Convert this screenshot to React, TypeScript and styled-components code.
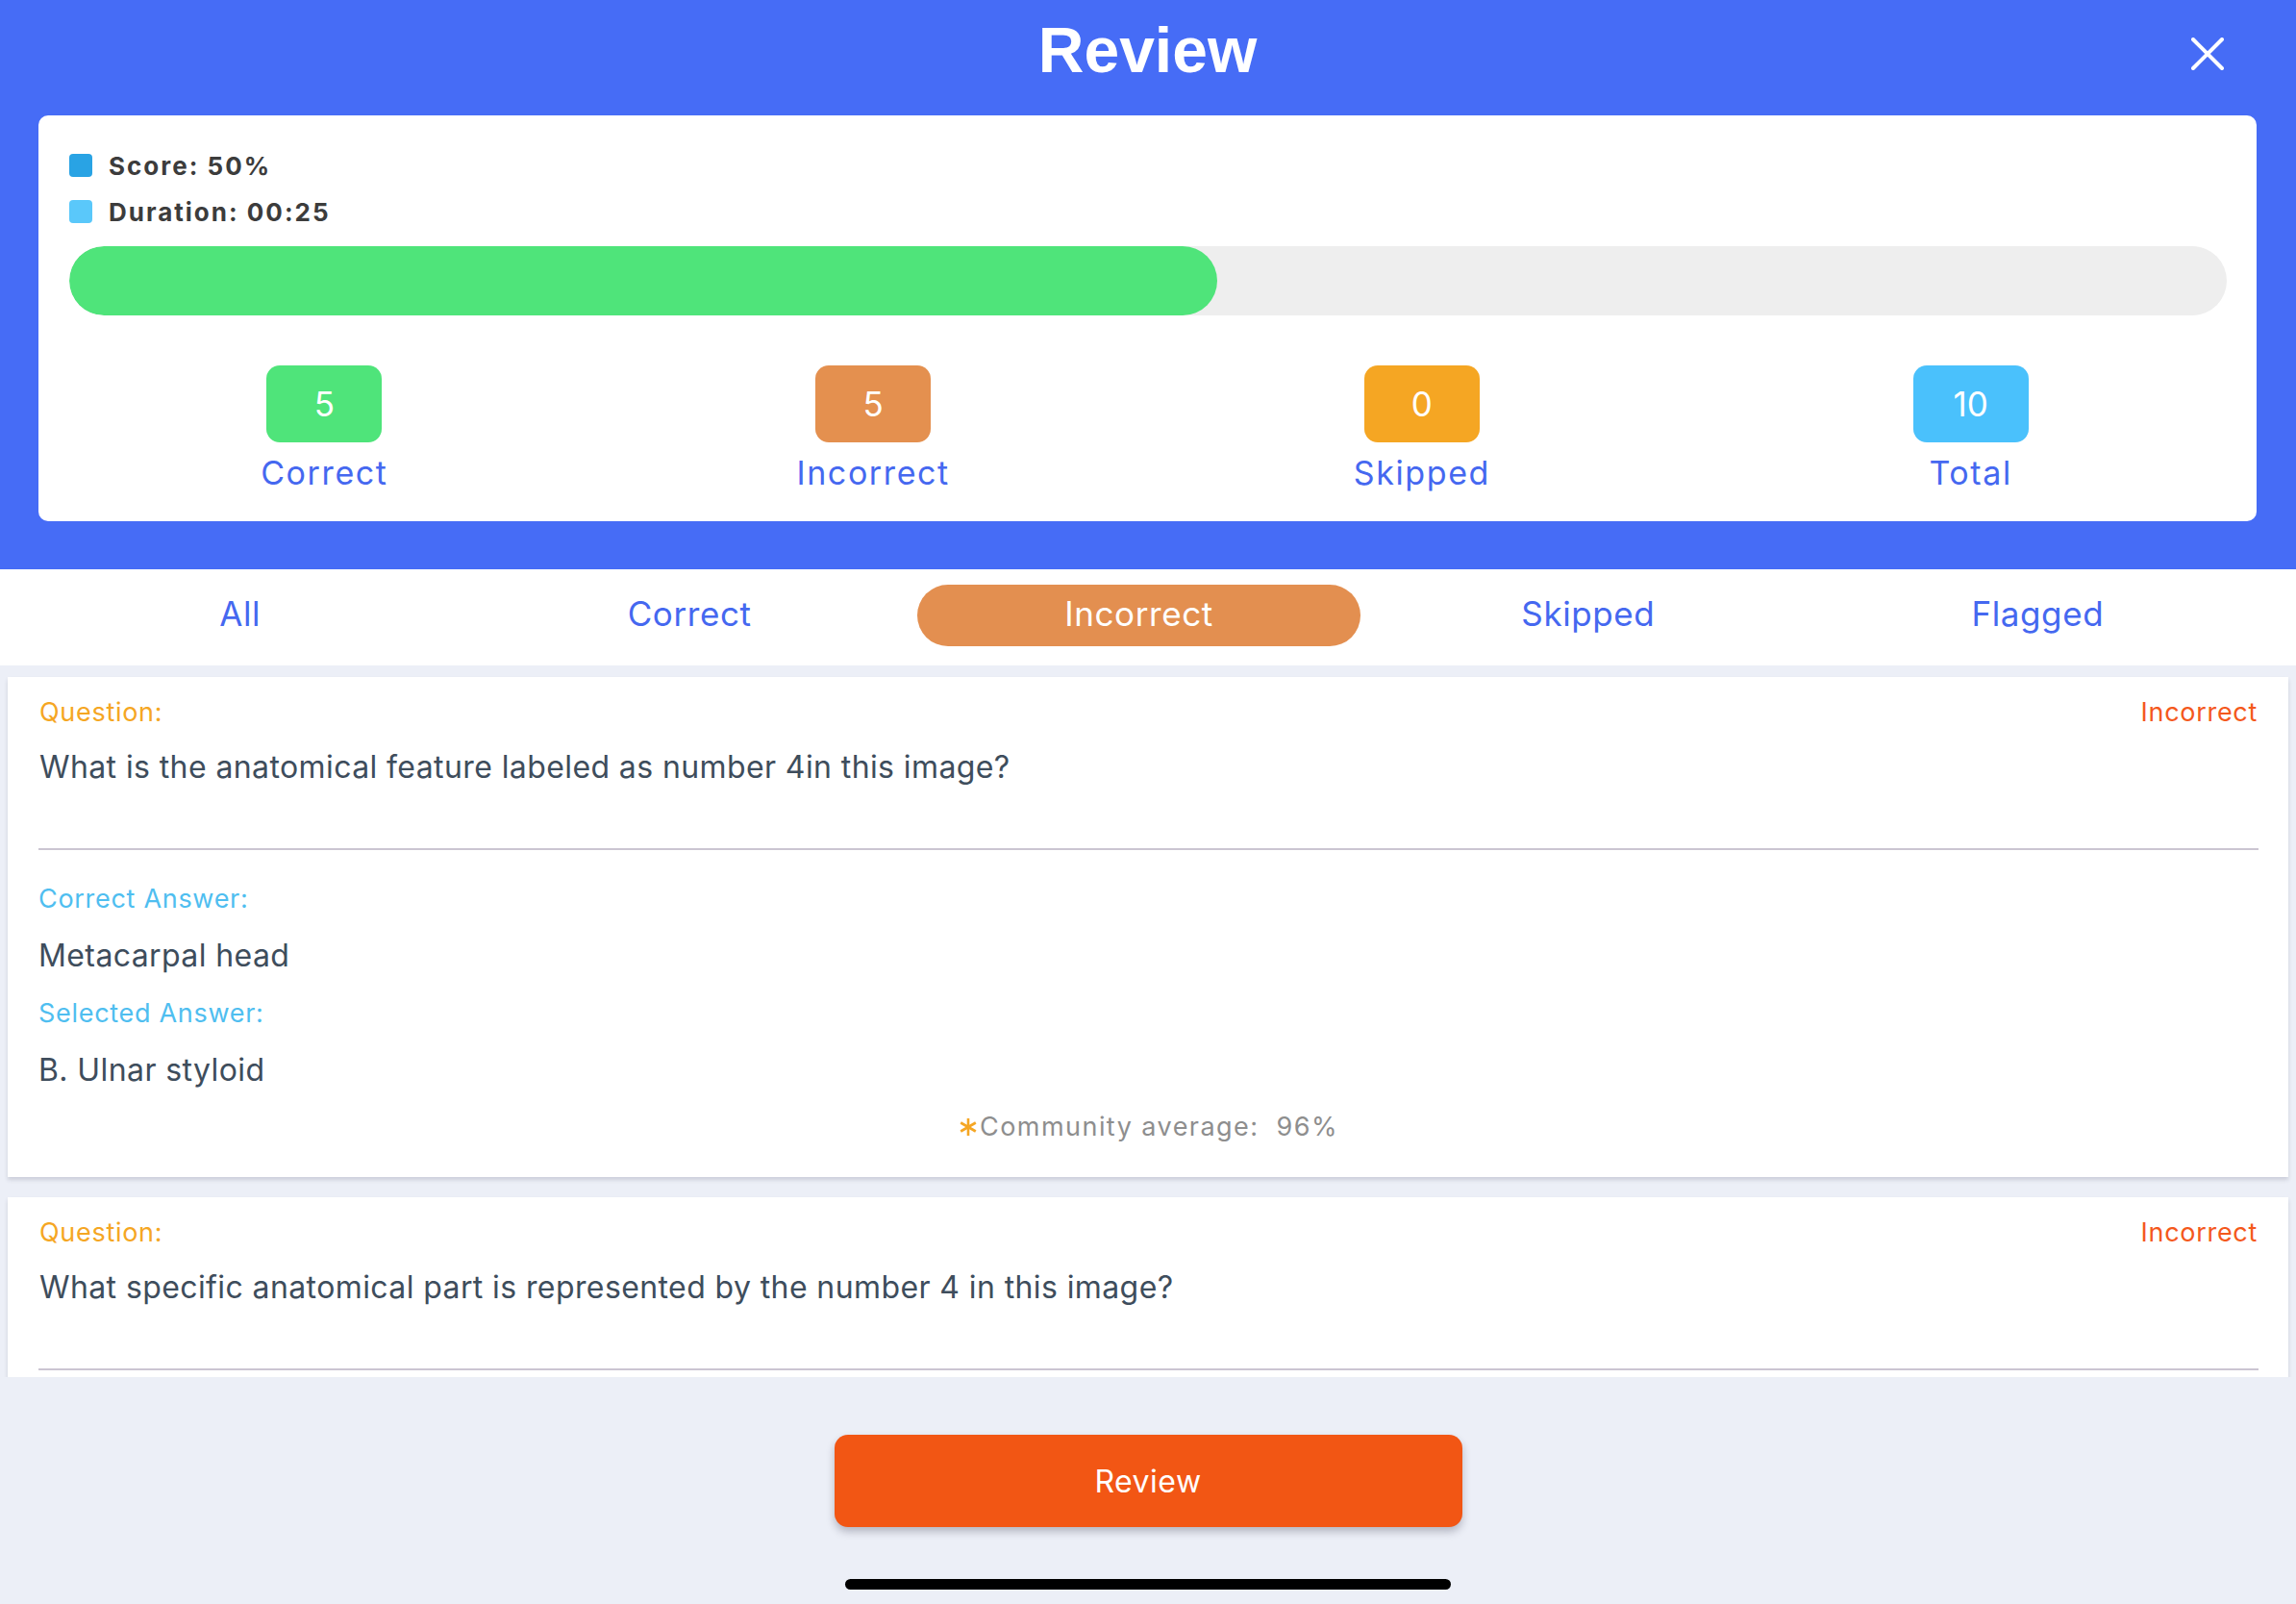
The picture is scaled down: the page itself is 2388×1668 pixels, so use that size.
import React from "react";
import styled, { createGlobalStyle } from "styled-components";

const Global = createGlobalStyle`
  html, body { margin: 0; padding: 0; }
  body { font-family: Inter, "Noto Sans", sans-serif; background: #eceff7; }
  * { box-sizing: border-box; }
`;

const Page = styled.div`
  width: 2388px;
  height: 1668px;
  display: flex;
  flex-direction: column;
  background: #eceff7;
  overflow: hidden;
`;

const Header = styled.header`
  background: #466cf6;
  height: 592px;
  display: flex;
  flex-direction: column;
  padding: 0 41px 0 40px;
`;

const TitleBar = styled.div`
  height: 104px;
  display: grid;
  grid-template-columns: 1fr auto 1fr;
  align-items: center;
`;

const Title = styled.h1`
  grid-column: 2;
  margin: 0;
  font-family: "Liberation Sans", Arial, sans-serif;
  font-weight: 700;
  font-size: 66px;
  color: #ffffff;
  line-height: 1;
`;

const CloseButton = styled.button`
  grid-column: 3;
  justify-self: end;
  margin: 8px 34px 0 0;
  width: 34px;
  height: 34px;
  padding: 0;
  border: 0;
  background: transparent;
  display: flex;
`;

const SummaryCard = styled.section`
  margin-top: 16px;
  background: #ffffff;
  border-radius: 10px;
  height: 422px;
  padding: 28px 31px 0 32px;
  display: flex;
  flex-direction: column;
`;

const Legend = styled.div`
  display: flex;
  align-items: center;
  gap: 17px;
  height: 48px;
  font-weight: 700;
  font-size: 26px;
  letter-spacing: 2px;
  color: #3c3c3c;
`;

const Swatch = styled.span<{ $color: string }>`
  width: 24px;
  height: 24px;
  border-radius: 4px;
  background: ${(p) => p.$color};
`;

const Track = styled.div`
  margin-top: 12px;
  height: 72px;
  border-radius: 36px;
  background: #eeeeee;
  overflow: hidden;
`;

const Fill = styled.div<{ $pct: number }>`
  height: 100%;
  width: ${(p) => p.$pct}%;
  background: #4fe47a;
  border-radius: 36px;
`;

const StatsRow = styled.div`
  margin: 52px -19px 0 -20px;
  display: grid;
  grid-template-columns: repeat(4, 1fr);
`;

const Stat = styled.div`
  display: flex;
  flex-direction: column;
  align-items: center;
`;

const StatBox = styled.div<{ $color: string }>`
  width: 120px;
  height: 80px;
  border-radius: 14px;
  background: ${(p) => p.$color};
  color: #ffffff;
  font-size: 35px;
  font-weight: 400;
  display: flex;
  align-items: center;
  justify-content: center;
`;

const StatLabel = styled.div`
  margin-top: 12px;
  line-height: 40px;
  font-size: 34px;
  letter-spacing: 1.6px;
  color: #4568f0;
`;

const Tabs = styled.nav`
  height: 100px;
  background: #ffffff;
  display: grid;
  grid-template-columns: repeat(5, 1fr);
  align-items: start;
  padding: 16px 35px 0 16px;
`;

const Tab = styled.div<{ $active?: boolean }>`
  margin: 0 3px;
  height: 64px;
  padding-bottom: 4px;
  border-radius: 32px;
  display: flex;
  align-items: center;
  justify-content: center;
  font-size: 35px;
  letter-spacing: 0.6px;
  color: ${(p) => (p.$active ? "#ffffff" : "#4568f0")};
  background: ${(p) => (p.$active ? "#e38f50" : "transparent")};
`;

const List = styled.div`
  flex: 1;
  overflow: hidden;
  padding: 12px 8px 0;
  display: flex;
  flex-direction: column;
  gap: 21px;
`;

const QuestionCard = styled.article`
  flex-shrink: 0;
  background: #ffffff;
  padding: 18px 32px 34px 33px;
  box-shadow: 0 3px 4px rgba(60, 60, 90, 0.18);
`;

const CardHead = styled.div`
  display: flex;
  justify-content: space-between;
  align-items: center;
  height: 36px;
  font-size: 27px;
  letter-spacing: 0.7px;
`;

const QLabel = styled.span`
  color: #f5a623;
`;

const Status = styled.span`
  color: #f4581c;
`;

const QText = styled.p`
  margin: 20px 0 0;
  line-height: 40px;
  font-size: 32px;
  letter-spacing: 0.4px;
  color: #3e4d5c;
`;

const Divider = styled.hr`
  margin: 64px -1px 0 -1px;
  border: 0;
  height: 2px;
  background: #cbc5d2;
`;

const AnswerLabel = styled.div<{ $gap: number }>`
  margin-top: ${(p) => p.$gap}px;
  line-height: 36px;
  font-size: 27px;
  letter-spacing: 0.7px;
  color: #4fbef0;
  margin-left: -1px;
`;

const AnswerText = styled.div`
  margin-top: 21px;
  margin-left: -1px;
  line-height: 40px;
  font-size: 32px;
  letter-spacing: 0.4px;
  color: #3e4d5c;
`;

const Community = styled.div`
  margin-top: 21px;
  line-height: 36px;
  font-size: 27px;
  letter-spacing: 1.45px;
  color: #8e8e8e;
  display: flex;
  justify-content: center;
  align-items: center;
  white-space: pre;
`;

const Footer = styled.footer`
  height: 236px;
  flex-shrink: 0;
  display: flex;
  flex-direction: column;
  align-items: center;
`;

const ReviewButton = styled.button`
  margin-top: 60px;
  width: 653px;
  height: 96px;
  border: 0;
  border-radius: 14px;
  background: #f25614;
  color: #ffffff;
  font-family: Inter, sans-serif;
  font-size: 32px;
  letter-spacing: 0.5px;
  box-shadow: 0 5px 8px rgba(40, 40, 60, 0.28);
`;

const HomeIndicator = styled.div`
  margin-top: 54px;
  width: 630px;
  height: 11px;
  border-radius: 6px;
  background: #000000;
`;

const Asterisk = () => (
  <svg width="20" height="22" viewBox="0 0 20 22" style={{ marginRight: 2 }}>
    <g stroke="#f5a623" strokeWidth="2.6" strokeLinecap="butt">
      <line x1="10" y1="2" x2="10" y2="20" />
      <line x1="2.2" y1="6.5" x2="17.8" y2="15.5" />
      <line x1="2.2" y1="15.5" x2="17.8" y2="6.5" />
    </g>
  </svg>
);

const stats = [
  { n: "5", label: "Correct", color: "#4fe47a" },
  { n: "5", label: "Incorrect", color: "#e4904f" },
  { n: "0", label: "Skipped", color: "#f5a623" },
  { n: "10", label: "Total", color: "#4ac1fc" },
];

const tabs = ["All", "Correct", "Incorrect", "Skipped", "Flagged"];

export default function App() {
  return (
    <Page>
      <Global />
      <Header>
        <TitleBar>
          <Title>Review</Title>
          <CloseButton aria-label="Close">
            <svg width="34" height="34" viewBox="0 0 34 34">
              <g stroke="#ffffff" strokeWidth="4" strokeLinecap="round">
                <line x1="2" y1="2" x2="32" y2="32" />
                <line x1="32" y1="2" x2="2" y2="32" />
              </g>
            </svg>
          </CloseButton>
        </TitleBar>
        <SummaryCard>
          <Legend>
            <Swatch $color="#29a3e4" />
            Score: 50%
          </Legend>
          <Legend>
            <Swatch $color="#5ac8fa" />
            Duration: 00:25
          </Legend>
          <Track>
            <Fill $pct={53.2} />
          </Track>
          <StatsRow>
            {stats.map((s) => (
              <Stat key={s.label}>
                <StatBox $color={s.color}>{s.n}</StatBox>
                <StatLabel>{s.label}</StatLabel>
              </Stat>
            ))}
          </StatsRow>
        </SummaryCard>
      </Header>
      <Tabs>
        {tabs.map((t) => (
          <Tab key={t} $active={t === "Incorrect"}>
            {t}
          </Tab>
        ))}
      </Tabs>
      <List>
        <QuestionCard>
          <CardHead>
            <QLabel>Question:</QLabel>
            <Status>Incorrect</Status>
          </CardHead>
          <QText>What is the anatomical feature labeled as number 4in this image?</QText>
          <Divider />
          <AnswerLabel $gap={33}>Correct Answer:</AnswerLabel>
          <AnswerText>Metacarpal head</AnswerText>
          <AnswerLabel $gap={22}>Selected Answer:</AnswerLabel>
          <AnswerText>B. Ulnar styloid</AnswerText>
          <Community>
            <Asterisk />
            {"Community average:  96%"}
          </Community>
        </QuestionCard>
        <QuestionCard>
          <CardHead>
            <QLabel>Question:</QLabel>
            <Status>Incorrect</Status>
          </CardHead>
          <QText>What specific anatomical part is represented by the number 4 in this image?</QText>
          <Divider />
        </QuestionCard>
      </List>
      <Footer>
        <ReviewButton>Review</ReviewButton>
        <HomeIndicator />
      </Footer>
    </Page>
  );
}
